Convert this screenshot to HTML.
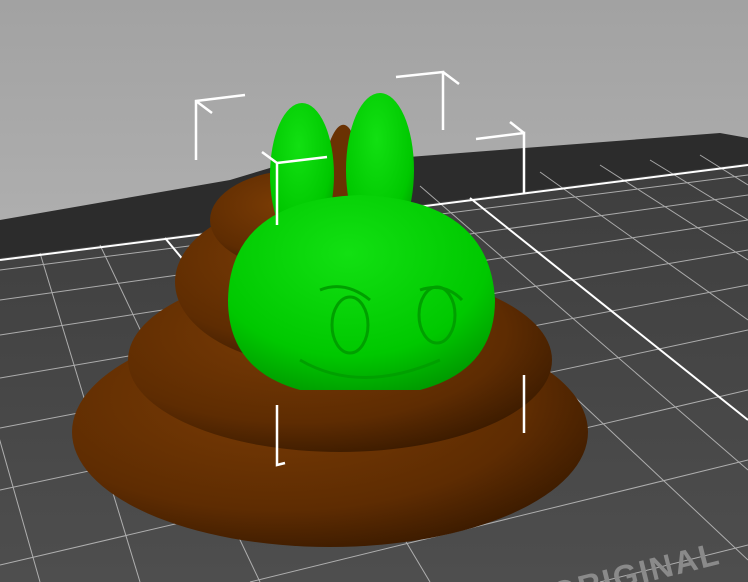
<!DOCTYPE html>
<html><head><style>html,body{margin:0;padding:0;width:748px;height:582px;overflow:hidden;background:#b4b4b4}</style></head>
<body>
<svg width="748" height="582" viewBox="0 0 748 582" xmlns="http://www.w3.org/2000/svg">
<defs>
<linearGradient id="sky" x1="0" y1="0" x2="0" y2="1"><stop offset="0" stop-color="#a2a2a2"/><stop offset="1" stop-color="#c2c2c2"/></linearGradient>
<linearGradient id="bed" x1="0" y1="0" x2="0" y2="1"><stop offset="0" stop-color="#3e3e3e"/><stop offset="1" stop-color="#4e4e4e"/></linearGradient>
<radialGradient id="br" cx="0.4" cy="0.35" r="0.7"><stop offset="0" stop-color="#7a3c05"/><stop offset="0.7" stop-color="#5e2c02"/><stop offset="1" stop-color="#3a1a00"/></radialGradient>
<radialGradient id="gr" cx="0.45" cy="0.3" r="0.75"><stop offset="0" stop-color="#12e012"/><stop offset="0.7" stop-color="#00c800"/><stop offset="1" stop-color="#009a00"/></radialGradient>
</defs>
<rect width="748" height="582" fill="url(#sky)"/>
<polygon points="0,220 230,180 290,162 330,163 720,133 748,138 748,582 0,582" fill="#2c2c2c"/>
<polygon points="0,258 748,163 748,582 0,582" fill="url(#bed)"/>
<g stroke="#cfcfcf" stroke-width="1" fill="none" opacity="0.75">
<line x1="0" y1="270" x2="748" y2="175"/><line x1="0" y1="300" x2="748" y2="195"/><line x1="0" y1="335" x2="748" y2="220"/>
<line x1="0" y1="378" x2="748" y2="250"/><line x1="0" y1="428" x2="748" y2="285"/><line x1="0" y1="490" x2="748" y2="330"/><line x1="0" y1="565" x2="748" y2="390"/><line x1="250" y1="582" x2="748" y2="460"/><line x1="600" y1="582" x2="748" y2="545"/>
<line x1="40" y1="253" x2="140" y2="582"/><line x1="-40" y1="300" x2="40" y2="582"/>
<line x1="540" y1="172" x2="748" y2="320"/><line x1="600" y1="165" x2="748" y2="260"/><line x1="650" y1="160" x2="748" y2="220"/><line x1="700" y1="155" x2="748" y2="185"/>
<line x1="420" y1="186" x2="748" y2="470"/><line x1="360" y1="195" x2="748" y2="560"/>
<line x1="100" y1="245" x2="260" y2="582"/><line x1="220" y1="230" x2="430" y2="582"/>
</g>
<g stroke="#ffffff" stroke-width="2" fill="none">
<line x1="165" y1="238" x2="300" y2="400"/><line x1="470" y1="198" x2="748" y2="420"/><line x1="0" y1="260" x2="748" y2="165"/>
</g>
<text x="555" y="605" transform="rotate(-14 555 605)" font-family="Liberation Sans, sans-serif" font-weight="bold" font-size="32" fill="#8a8a8a" letter-spacing="2">ORIGINAL</text>
<!-- poop -->
<ellipse cx="330" cy="432" rx="258" ry="115" fill="url(#br)"/>
<ellipse cx="340" cy="360" rx="212" ry="92" fill="url(#br)"/>
<ellipse cx="325" cy="282" rx="150" ry="85" fill="url(#br)"/>
<ellipse cx="300" cy="220" rx="90" ry="50" fill="url(#br)"/>
<path d="M315,200 Q330,120 345,125 Q360,130 355,200 Z" fill="#6a3203"/>
<!-- green -->
<ellipse cx="302" cy="175" rx="32" ry="72" fill="url(#gr)"/>
<ellipse cx="380" cy="170" rx="34" ry="77" fill="url(#gr)"/>
<path d="M228,300 Q230,200 360,195 Q490,200 495,300 Q495,370 420,390 L300,390 Q228,370 228,300 Z" fill="url(#gr)"/>
<g fill="none" stroke="#00a000" stroke-width="3">
<ellipse cx="350" cy="325" rx="18" ry="28"/><ellipse cx="437" cy="315" rx="18" ry="28"/>
<path d="M320,290 Q345,280 370,300"/><path d="M420,290 Q445,282 462,300"/>
<path d="M300,360 Q360,395 440,360"/>
</g>
<!-- bounding corners -->
<g stroke="#ffffff" stroke-width="2.5" fill="none">
<path d="M196,160 V101 L245,95 M196,101 L212,113"/>
<path d="M443,130 V72 L396,77 M443,72 L459,84"/>
<path d="M524,193 V133 L476,139 M524,133 L510,122"/>
<path d="M277,225 V163 L327,157 M277,163 L262,152"/>
<path d="M277,405 V465 L285,463"/>
<path d="M524,375 V433"/>
</g>
</svg>
</body></html>
